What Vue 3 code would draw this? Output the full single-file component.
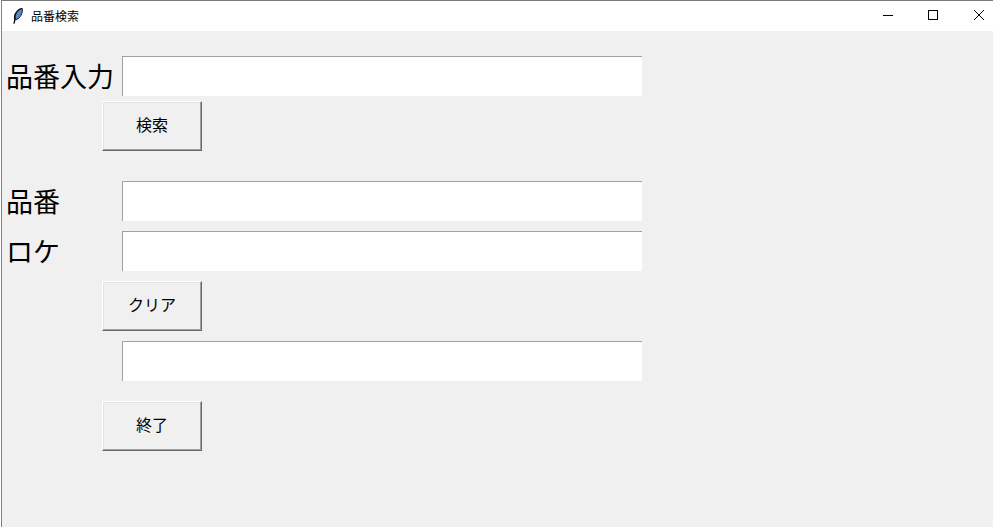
<script setup>
const title = "品番検索";
</script>

<template>
  <div class="window">
    <header class="titlebar">
      <svg class="feather" width="10" height="16" viewBox="0 0 10 16">
        <path d="M9.2 0.4C5.6 1 2 4.6 1.6 8.8c-.1 1.2 0 2 .3 2.8L1 15.6" fill="none" stroke="#000" stroke-width="1.3" />
        <path d="M9.2 0.4C10 4.4 8 10 2.6 12 1.8 9.4 2.4 6.6 3.7 4.6 5 2.8 7 1 9.2 0.4z" fill="#5b87c0" stroke="#141f33" stroke-width="1" />
      </svg>
      <span class="title">{{ title }}</span>
      <div class="controls">
        <svg class="ctl" width="46" height="30" viewBox="0 0 46 30">
          <path d="M19 14.5h10" stroke="#000" fill="none" />
        </svg>
        <svg class="ctl" width="46" height="30" viewBox="0 0 46 30">
          <rect x="18.5" y="9.5" width="9" height="9" stroke="#000" fill="none" />
        </svg>
        <svg class="ctl" width="46" height="30" viewBox="0 0 46 30">
          <path d="M18 9l10 10M28 9L18 19" stroke="#000" fill="none" stroke-width="1" />
        </svg>
      </div>
    </header>

    <main class="content">
      <div class="row first">
        <label class="lbl">品番入力</label>
        <input class="entry" type="text" />
      </div>
      <button class="btn search">検索</button>

      <div class="row item">
        <label class="lbl">品番</label>
        <input class="entry" type="text" />
      </div>
      <div class="row loc">
        <label class="lbl">ロケ</label>
        <input class="entry" type="text" />
      </div>
      <button class="btn clear">クリア</button>

      <div class="row extra">
        <input class="entry" type="text" />
      </div>
      <button class="btn quit">終了</button>
    </main>
  </div>
</template>

<style>
html,
body {
  margin: 0;
  overflow: hidden;
  background: #fff;
}
</style>

<style scoped>
.window {
  width: 992px;
  height: 527px;
  margin-left: 1px;
  box-sizing: border-box;
  border-top: 1px solid #7a7a7a;
  border-left: 1px solid #808080;
  background: #f0f0f0;
  display: flex;
  flex-direction: column;
  font-family: "Noto Sans CJK JP", "Liberation Sans", sans-serif;
  color: #000;
  overflow: hidden;
}

.titlebar {
  height: 30px;
  flex: none;
  background: #fff;
  display: flex;
  align-items: center;
}

.feather {
  margin-left: 11px;
}

.title {
  margin-left: 8px;
  font-size: 12px;
  line-height: 30px;
}

.controls {
  margin-left: auto;
  display: flex;
  margin-right: -9px;
}

.ctl {
  display: block;
}

.content {
  display: flex;
  flex-direction: column;
  align-items: flex-start;
}

.row {
  display: flex;
  align-items: center;
  height: 40px;
  padding-left: 120px;
  position: relative;
}

.first {
  margin-top: 25px;
}

.item {
  margin-top: 30px;
}

.loc,
.extra {
  margin-top: 10px;
}

.lbl {
  position: absolute;
  left: 4px;
  top: 0;
  font-size: 27px;
  line-height: 40px;
  white-space: nowrap;
}

.entry {
  width: 520px;
  height: 40px;
  box-sizing: border-box;
  border: 0;
  border-top: 1px solid #a0a0a0;
  border-left: 1px solid #a0a0a0;
  background: #fff;
  padding: 0;
  outline: none;
}

.btn {
  width: 100px;
  height: 50px;
  margin-left: 100px;
  box-sizing: border-box;
  padding: 0 0 5px;
  background: #f0f0f0;
  border: 1px solid;
  border-color: #fff #696969 #696969 #fff;
  box-shadow: inset -1px -1px 0 #a0a0a0, inset 1px 1px 0 #e3e3e3;
  font-family: inherit;
  font-size: 16px;
  color: #000;
}

.search {
  margin-top: 5px;
}

.clear {
  margin-top: 10px;
}

.quit {
  margin-top: 20px;
}
</style>
